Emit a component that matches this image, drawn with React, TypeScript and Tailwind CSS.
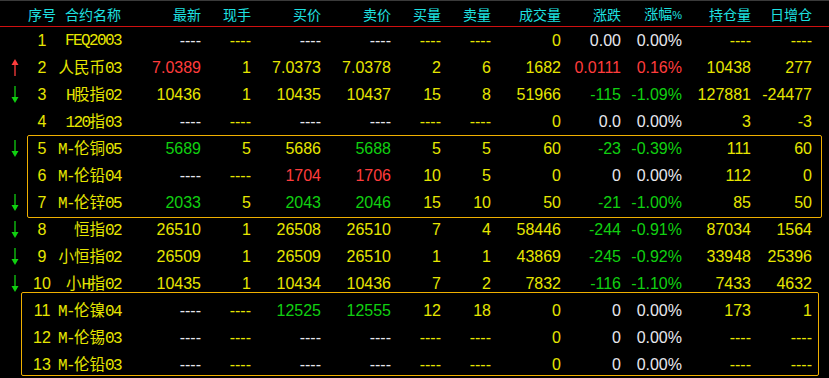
type Tone = "y" | "w" | "r" | "g"

const tone: Record<Tone, string> = {
  y: "text-[#e6e600]",
  w: "text-[#e8e8ef]",
  r: "text-[#ff3c3c]",
  g: "text-[#10d010]",
}

const headers = ["最新", "现手", "买价", "卖价", "买量", "卖量", "成交量", "涨跌", "涨幅", "持仓量", "日增仓"]

const rows: { arrow?: "up" | "down"; name: string; cells: string }[] = [
  { name: "FEQ2003", cells: "w:---- y:---- w:---- w:---- y:---- y:---- y:0 w:0.00 w:0.00% y:---- y:----" },
  { arrow: "up", name: "人民币03", cells: "r:7.0389 y:1 y:7.0373 y:7.0378 y:2 y:6 y:1682 r:0.0111 r:0.16% y:10438 y:277" },
  { arrow: "down", name: "H股指02", cells: "y:10436 y:1 y:10435 y:10437 y:15 y:8 y:51966 g:-115 g:-1.09% y:127881 y:-24477" },
  { name: "120指03", cells: "w:---- y:---- w:---- w:---- y:---- y:---- y:0 w:0.0 w:0.00% y:3 y:-3" },
  { arrow: "down", name: "M-伦铜05", cells: "g:5689 y:5 y:5686 g:5688 y:5 y:5 y:60 g:-23 g:-0.39% y:111 y:60" },
  { name: "M-伦铅04", cells: "w:---- y:---- r:1704 r:1706 y:10 y:5 y:0 w:0 w:0.00% y:112 y:0" },
  { arrow: "down", name: "M-伦锌05", cells: "g:2033 y:5 g:2043 g:2046 y:15 y:10 y:50 g:-21 g:-1.00% y:85 y:50" },
  { arrow: "down", name: "恒指02", cells: "y:26510 y:1 y:26508 y:26510 y:7 y:4 y:58446 g:-244 g:-0.91% y:87034 y:1564" },
  { arrow: "down", name: "小恒指02", cells: "y:26509 y:1 y:26509 y:26510 y:1 y:1 y:43869 g:-245 g:-0.92% y:33948 y:25396" },
  { arrow: "down", name: "小H指02", cells: "y:10435 y:1 y:10434 y:10436 y:7 y:2 y:7832 g:-116 g:-1.10% y:7433 y:4632" },
  { name: "M-伦镍04", cells: "w:---- y:---- g:12525 g:12555 y:12 y:18 y:0 w:0 w:0.00% y:173 y:1" },
  { name: "M-伦锡03", cells: "w:---- y:---- w:---- w:---- y:---- y:---- y:0 w:0 w:0.00% y:---- y:----" },
  { name: "M-伦铅03", cells: "w:---- y:---- w:---- w:---- y:---- y:---- y:0 w:0 w:0.00% y:---- y:----" },
]

const grid =
  "grid grid-cols-[28px_28px_65px_80px_50px_70px_70px_50px_50px_70px_60px_61px_69px_61px]"

function Arrow({ dir }: { dir: "up" | "down" }) {
  const color = dir === "up" ? "#ff3c3c" : "#10d010"
  return (
    <svg width="8" height="17" viewBox="0 0 8 17" className="ml-[2px]">
      {dir === "up" ? (
        <>
          <path d="M4 0 L7.5 6 L0.5 6 Z" fill={color} />
          <rect x="3.2" y="5" width="1.6" height="12" fill={color} opacity="0.8" />
        </>
      ) : (
        <>
          <rect x="3.2" y="0" width="1.6" height="12" fill={color} opacity="0.8" />
          <path d="M4 17 L7.5 11 L0.5 11 Z" fill={color} />
        </>
      )}
    </svg>
  )
}

// ascii runs are narrow, like the half-width glyphs of the terminal font
function Name({ text }: { text: string }) {
  const parts = text.split(/([\x00-\x7f]+)/).filter(Boolean)
  return (
    <>
      {parts.map((p, i) =>
        /^[\x00-\x7f]+$/.test(p) ? (
          <span key={i} className="font-['Liberation_Mono',monospace] text-[16px] tracking-[-1.6px]">
            {p}
          </span>
        ) : (
          <span key={i} className="font-['Noto_Sans_CJK_SC',sans-serif] text-[15.5px]">
            {p}
          </span>
        )
      )}
    </>
  )
}

export default function App() {
  return (
    <div className="relative w-[829px] h-[378px] overflow-hidden bg-black border-t border-[#3a3a3a] font-['Liberation_Sans',sans-serif] select-none">
      <div className={`${grid} h-[26px] border-b border-[#d01010] items-center text-[14px] text-[#1ee0e0] font-['Noto_Sans_CJK_SC',sans-serif] leading-none`}>
        <div />
        <div className="text-center">序号</div>
        <div className="text-right">合约名称</div>
        {headers.map((h) => (
          <div key={h} className="text-right">
            {h}
            {h === "涨幅" && <span className="font-['Liberation_Sans',sans-serif] text-[11px]">%</span>}
          </div>
        ))}
      </div>

      {rows.map((r, i) => (
        <div key={i} className={`${grid} h-[27px] items-center text-[16px] leading-none`}>
          <div className="flex justify-center">{r.arrow && <Arrow dir={r.arrow} />}</div>
          <div className="text-center text-[#e6e600]">{i + 1}</div>
          <div className="text-right text-[#e6e600] whitespace-nowrap">
            <Name text={r.name} />
          </div>
          {r.cells.split(" ").map((c, j) => {
            const [t, v] = c.split(":")
            return (
              <div key={j} className={`text-right ${tone[t as Tone]}`}>
                {v}
              </div>
            )
          })}
        </div>
      ))}

      <div className="pointer-events-none absolute left-[27px] top-[134px] w-[795px] h-[83px] border border-[#f0b000] rounded-[2px]" />
      <div className="pointer-events-none absolute left-[21px] top-[291px] w-[798px] h-[84px] border border-[#f0b000] rounded-[2px]" />
    </div>
  )
}
